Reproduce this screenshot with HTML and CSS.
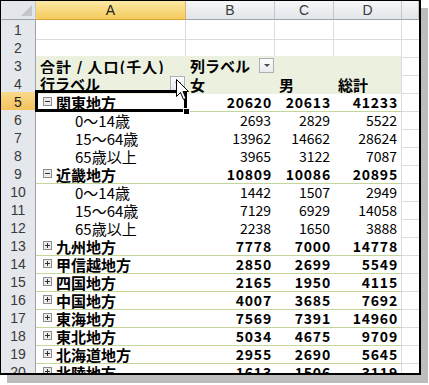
FILE: index.html
```html
<html>
<head>
    <meta charset="UTF-8">
    <title>ピボットテーブル</title>
    <link rel="stylesheet" href="styles.css">
</head>

<body>
    <div class="frame">
        <div class="row head">
            <div class="corner"></div>
            <div class="ch on">A</div>
            <div class="ch">B</div>
            <div class="ch">C</div>
            <div class="ch">D</div>
            <div class="ch"></div>
        </div>

        <div class="row">
            <div class="rh">1</div>
            <div class="c"></div><div class="c"></div><div class="c"></div><div class="c"></div><div class="c e"></div>
        </div>
        <div class="row">
            <div class="rh">2</div>
            <div class="c"></div><div class="c"></div><div class="c"></div><div class="c"></div><div class="c e"></div>
        </div>

        <!-- ピボットの見出し -->
        <div class="row">
            <div class="rh">3</div>
            <div class="p g b title">合計 / 人口(千人)</div>
            <div class="p g b btn-cell">列ラベル<span class="dd"></span></div>
            <div class="p g"></div>
            <div class="p g d"></div>
            <div class="c e"></div>
        </div>
        <div class="row">
            <div class="rh">4</div>
            <div class="p g b btn-cell">行ラベル<span class="dd"></span></div>
            <div class="p g b">女</div>
            <div class="p g b">男</div>
            <div class="p g b d">総計</div>
            <div class="c e"></div>
        </div>

        <div class="row">
            <div class="rh on">5</div>
            <div class="p r b grp sel"><svg class="tog" width="9" height="9"><rect x="0.5" y="0.5" width="8" height="8" fill="#ececec" stroke="#8d8d8d"/><path d="M2 4.5h5" stroke="#303030"/></svg>関東地方</div>
            <div class="p r b n">20620</div>
            <div class="p r b n">20613</div>
            <div class="p r b n d">41233</div>
            <div class="c e"></div>
        </div>
        <div class="row">
            <div class="rh">6</div>
            <div class="p sub">0～14歳</div>
            <div class="p n">2693</div>
            <div class="p n">2829</div>
            <div class="p n d">5522</div>
            <div class="c e"></div>
        </div>
        <div class="row">
            <div class="rh">7</div>
            <div class="p sub">15～64歳</div>
            <div class="p n">13962</div>
            <div class="p n">14662</div>
            <div class="p n d">28624</div>
            <div class="c e"></div>
        </div>
        <div class="row">
            <div class="rh">8</div>
            <div class="p sub">65歳以上</div>
            <div class="p n">3965</div>
            <div class="p n">3122</div>
            <div class="p n d">7087</div>
            <div class="c e"></div>
        </div>

        <div class="row">
            <div class="rh">9</div>
            <div class="p r b grp"><svg class="tog" width="9" height="9"><rect x="0.5" y="0.5" width="8" height="8" fill="#ececec" stroke="#8d8d8d"/><path d="M2 4.5h5" stroke="#303030"/></svg>近畿地方</div>
            <div class="p r b n">10809</div>
            <div class="p r b n">10086</div>
            <div class="p r b n d">20895</div>
            <div class="c e"></div>
        </div>
        <div class="row">
            <div class="rh">10</div>
            <div class="p sub">0～14歳</div>
            <div class="p n">1442</div>
            <div class="p n">1507</div>
            <div class="p n d">2949</div>
            <div class="c e"></div>
        </div>
        <div class="row">
            <div class="rh">11</div>
            <div class="p sub">15～64歳</div>
            <div class="p n">7129</div>
            <div class="p n">6929</div>
            <div class="p n d">14058</div>
            <div class="c e"></div>
        </div>
        <div class="row">
            <div class="rh">12</div>
            <div class="p sub">65歳以上</div>
            <div class="p n">2238</div>
            <div class="p n">1650</div>
            <div class="p n d">3888</div>
            <div class="c e"></div>
        </div>

        <!-- 折りたたまれた地方 -->
        <div class="row">
            <div class="rh">13</div>
            <div class="p r b grp"><svg class="tog" width="9" height="9"><rect x="0.5" y="0.5" width="8" height="8" fill="#ececec" stroke="#8d8d8d"/><path d="M2 4.5h5M4.5 2v5" stroke="#303030"/></svg>九州地方</div>
            <div class="p r b n">7778</div>
            <div class="p r b n">7000</div>
            <div class="p r b n d">14778</div>
            <div class="c e"></div>
        </div>
        <div class="row">
            <div class="rh">14</div>
            <div class="p r b grp"><svg class="tog" width="9" height="9"><rect x="0.5" y="0.5" width="8" height="8" fill="#ececec" stroke="#8d8d8d"/><path d="M2 4.5h5M4.5 2v5" stroke="#303030"/></svg>甲信越地方</div>
            <div class="p r b n">2850</div>
            <div class="p r b n">2699</div>
            <div class="p r b n d">5549</div>
            <div class="c e"></div>
        </div>
        <div class="row">
            <div class="rh">15</div>
            <div class="p r b grp"><svg class="tog" width="9" height="9"><rect x="0.5" y="0.5" width="8" height="8" fill="#ececec" stroke="#8d8d8d"/><path d="M2 4.5h5M4.5 2v5" stroke="#303030"/></svg>四国地方</div>
            <div class="p r b n">2165</div>
            <div class="p r b n">1950</div>
            <div class="p r b n d">4115</div>
            <div class="c e"></div>
        </div>
        <div class="row">
            <div class="rh">16</div>
            <div class="p r b grp"><svg class="tog" width="9" height="9"><rect x="0.5" y="0.5" width="8" height="8" fill="#ececec" stroke="#8d8d8d"/><path d="M2 4.5h5M4.5 2v5" stroke="#303030"/></svg>中国地方</div>
            <div class="p r b n">4007</div>
            <div class="p r b n">3685</div>
            <div class="p r b n d">7692</div>
            <div class="c e"></div>
        </div>
        <div class="row">
            <div class="rh">17</div>
            <div class="p r b grp"><svg class="tog" width="9" height="9"><rect x="0.5" y="0.5" width="8" height="8" fill="#ececec" stroke="#8d8d8d"/><path d="M2 4.5h5M4.5 2v5" stroke="#303030"/></svg>東海地方</div>
            <div class="p r b n">7569</div>
            <div class="p r b n">7391</div>
            <div class="p r b n d">14960</div>
            <div class="c e"></div>
        </div>
        <div class="row">
            <div class="rh">18</div>
            <div class="p r b grp"><svg class="tog" width="9" height="9"><rect x="0.5" y="0.5" width="8" height="8" fill="#ececec" stroke="#8d8d8d"/><path d="M2 4.5h5M4.5 2v5" stroke="#303030"/></svg>東北地方</div>
            <div class="p r b n">5034</div>
            <div class="p r b n">4675</div>
            <div class="p r b n d">9709</div>
            <div class="c e"></div>
        </div>
        <div class="row">
            <div class="rh">19</div>
            <div class="p r b grp"><svg class="tog" width="9" height="9"><rect x="0.5" y="0.5" width="8" height="8" fill="#ececec" stroke="#8d8d8d"/><path d="M2 4.5h5M4.5 2v5" stroke="#303030"/></svg>北海道地方</div>
            <div class="p r b n">2955</div>
            <div class="p r b n">2690</div>
            <div class="p r b n d">5645</div>
            <div class="c e"></div>
        </div>
        <div class="row">
            <div class="rh">20</div>
            <div class="p r b grp"><svg class="tog" width="9" height="9"><rect x="0.5" y="0.5" width="8" height="8" fill="#ececec" stroke="#8d8d8d"/><path d="M2 4.5h5M4.5 2v5" stroke="#303030"/></svg>北陸地方</div>
            <div class="p r b n">1613</div>
            <div class="p r b n">1506</div>
            <div class="p r b n d">3119</div>
            <div class="c e"></div>
        </div>

        <!-- マウスカーソル -->
        <svg class="pointer" width="13" height="21" viewBox="0 0 13 21">
            <path d="M0.5 0.5V17.5L4.5 13.5L7.5 20.5L10 19.5L7 12.5H12.5Z" fill="#fff" stroke="#000"/>
        </svg>
    </div>
</body>
</html>
```

FILE: styles.css
```css
body {
    margin: 0;
    background: #ffffff;
}

.frame {
    position: relative;
    width: 418px;
    height: 372px;
    border: solid #000;
    border-width: 1px 2px 2px 1px;
    box-shadow: 7px 8px 0 #bdbdbd;
    overflow: hidden;
    background: #fff;
    font-family: "Noto Sans CJK JP", "Liberation Sans", sans-serif;
    color: #000;
}

.row {
    display: grid;
    grid-template-columns: 35px 150px 89px 59px 68px 17px;
    height: 18px;
}

.row > div {
    box-sizing: border-box;
    display: flex;
    align-items: center;
    white-space: nowrap;
    min-width: 0;
    line-height: 17px;
    padding-top: 2px;
}

/* 見出し行 */
.head {
    height: 19px;
}

.head > div {
    padding-top: 1px;
}

.corner {
    background: #e3e6ea;
    border-right: 1px solid #c3c7cc;
    border-bottom: 1px solid #9ea3a9;
    position: relative;
}

.corner::after {
    content: "";
    position: absolute;
    right: 3px;
    bottom: 3px;
    border-style: solid;
    border-width: 0 0 11px 11px;
    border-color: transparent transparent #c2c6cc transparent;
}

.ch {
    justify-content: center;
    background: linear-gradient(#f6f7f9, #e2e5e9);
    border-right: 1px solid #c3c7cc;
    border-bottom: 1px solid #9ea3a9;
    font-family: "Liberation Sans", sans-serif;
    font-size: 14px;
    color: #3a3a3a;
}

.ch.on {
    background: linear-gradient(#fbe9a4, #f5cb5c);
    border-bottom-color: #d9a23a;
    border-right-color: #d9b368;
    color: #222;
}

/* 行番号 */
.rh {
    justify-content: center;
    background: #e4e7eb;
    border-right: 1px solid #9ea3a9;
    border-bottom: 1px solid #c9cdd2;
    font-family: "Liberation Sans", sans-serif;
    font-size: 14px;
    color: #3a3a3a;
}

.rh.on {
    background: linear-gradient(#f9d98c, #f4c15a);
    border-bottom-color: #d9a23a;
    border-right-color: #c98d2c;
    color: #222;
}

/* 通常のセル */
.c {
    border-right: 1px solid #dadcdd;
    border-bottom: 1px solid #dadcdd;
}

.e {
    border-right: none;
}

/* ピボットのセル */
.p {
    border-bottom: 1px solid transparent;
    padding-left: 4px;
    padding-right: 4px;
    font-size: 15px;
}

.title {
    letter-spacing: 1px;
}

.g {
    background: #ebf1de;
}

.r {
    border-bottom-color: #c4d79b;
}

.d {
    border-right: 1px solid #dadcdd;
}

.b {
    font-weight: bold;
}

.n {
    justify-content: flex-end;
    font-size: 14px;
    padding-right: 4px;
}

.p.n.b {
    font-size: 14px;
    letter-spacing: 0.8px;
    padding-right: 3px;
}

.p.grp {
    padding-left: 7px;
}

.p.sub {
    padding-left: 39px;
}

.tog {
    flex: none;
    margin-right: 4px;
    margin-top: -2px;
}

.p.btn-cell {
    padding-right: 1px;
    padding-top: 0;
}

.dd {
    position: relative;
    flex: none;
    width: 15px;
    height: 15px;
    margin-left: auto;
    box-sizing: border-box;
    border: 1px solid #aab1b9;
    background: linear-gradient(#fdfdfd, #e8ebee);
}

.dd::after {
    content: "";
    position: absolute;
    left: 4px;
    top: 5px;
    border-style: solid;
    border-width: 3px 3px 0 3px;
    border-color: #4a4a4a transparent transparent transparent;
}

/* 選択中のセル */
.sel {
    position: relative;
}

.sel::before {
    content: "";
    position: absolute;
    left: -1px;
    top: -2px;
    right: -1px;
    bottom: -1px;
    border: 3px solid #000;
    z-index: 2;
}

.sel::after {
    content: "";
    position: absolute;
    right: -4px;
    bottom: -4px;
    width: 5px;
    height: 5px;
    background: #000;
    border: 1px solid #fff;
    z-index: 3;
}

.pointer {
    position: absolute;
    left: 175px;
    top: 78px;
    z-index: 5;
}
```
